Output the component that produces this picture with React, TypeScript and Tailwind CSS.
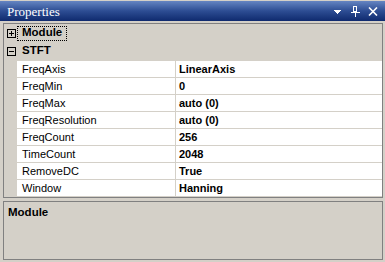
import React from 'react';

type Prop = { name: string; value: string };

const props: Prop[] = [
  { name: 'FreqAxis', value: 'LinearAxis' },
  { name: 'FreqMin', value: '0' },
  { name: 'FreqMax', value: 'auto (0)' },
  { name: 'FreqResolution', value: 'auto (0)' },
  { name: 'FreqCount', value: '256' },
  { name: 'TimeCount', value: '2048' },
  { name: 'RemoveDC', value: 'True' },
  { name: 'Window', value: 'Hanning' },
];

function ExpandBox({ open }: { open: boolean }) {
  return (
    <svg width="9" height="9" viewBox="0 0 9 9" className="block" shapeRendering="crispEdges">
      <rect x="0.5" y="0.5" width="8" height="8" fill="none" stroke="#000" />
      <line x1="2" y1="4.5" x2="7" y2="4.5" stroke="#000" />
      {!open && <line x1="4.5" y1="2" x2="4.5" y2="7" stroke="#000" />}
    </svg>
  );
}

function TitleIcons() {
  return (
    <div className="flex items-center h-full">
      <svg width="9" height="6" viewBox="0 0 9 6" className="mr-[9px] mt-[3px]" shapeRendering="crispEdges">
        <polygon points="0,0 8,0 4,4" fill="#fff" />
      </svg>
      <svg width="9" height="11" viewBox="0 0 9 11" className="mr-[8px]" shapeRendering="crispEdges">
        <rect x="2.5" y="0.5" width="3" height="5" fill="none" stroke="#fff" />
        <rect x="5" y="0" width="1" height="6" fill="#fff" />
        <rect x="0" y="6" width="9" height="1" fill="#fff" />
        <rect x="4" y="7" width="1" height="4" fill="#fff" />
      </svg>
      <svg width="10" height="9" viewBox="0 0 10 9" className="mr-[7px]">
        <path d="M1 0.5 L9 8.5 M9 0.5 L1 8.5" stroke="#fff" strokeWidth="1.6" />
      </svg>
    </div>
  );
}

export default function App() {
  return (
    <div
      className="w-[385px] h-[262px] bg-[#d4d0c8] overflow-hidden pt-px text-black"
      style={{ fontFamily: '"Liberation Sans", Arial, sans-serif' }}
    >
      <div className="h-[20px] flex items-center justify-between bg-gradient-to-b from-[#6585c2] via-[#2d4d93] to-[#0f2a6e]">
        <span
          className="pl-[7px] text-white text-[13px] leading-none"
          style={{ fontFamily: '"Liberation Serif", "Times New Roman", serif' }}
        >
          Properties
        </span>
        <TitleIcons />
      </div>

      <div className="mt-[2px] ml-[3px] w-[380px] h-[175px] border border-[#808080] flex flex-col">
        <div className="h-[18px] flex items-center">
          <div className="w-[13px] flex justify-center pl-[1px]">
            <ExpandBox open={false} />
          </div>
          <div className="h-[15px] flex items-center px-[4px] border border-dotted border-black">
            <span className="font-bold text-[11.5px] leading-none">Module</span>
          </div>
        </div>
        <div className="h-[18px] flex items-center">
          <div className="w-[13px] flex justify-center pl-[1px]">
            <ExpandBox open={true} />
          </div>
          <span className="pl-[5px] font-bold text-[11.5px] leading-none">STFT</span>
        </div>
        <div className="ml-[13px] border-t border-[#d4d0c8] bg-white">
          {props.map((p) => (
            <div key={p.name} className="h-[17px] flex border-b border-[#d4d0c8]">
              <div className="w-[159px] pl-[5px] flex items-center text-[11px] leading-none border-r border-[#d4d0c8]">
                {p.name}
              </div>
              <div className="flex-1 pl-[3px] flex items-center text-[11px] font-bold leading-none">
                {p.value}
              </div>
            </div>
          ))}
        </div>
      </div>

      <div className="mt-[3px] ml-[3px] w-[380px] h-[59px] border border-[#808080] pl-[4px] pt-[5px] leading-none">
        <div className="font-bold text-[11.5px] leading-none">Module</div>
      </div>
    </div>
  );
}
